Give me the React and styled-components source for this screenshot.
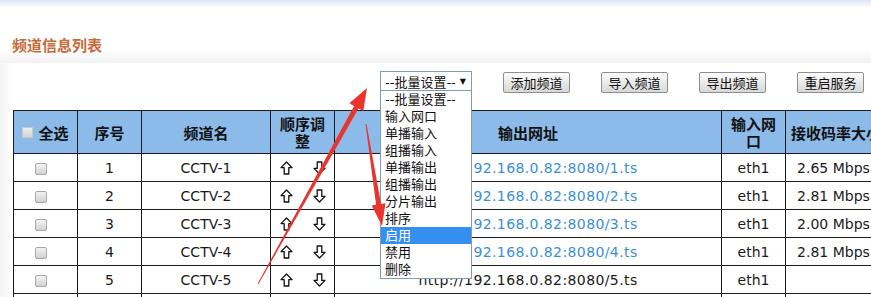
import React from "react";
import { styled, createGlobalStyle } from "styled-components";

const GlobalStyle = createGlobalStyle`
  html, body {
    margin: 0;
    padding: 0;
    width: 871px;
    height: 297px;
    overflow: hidden;
    background: #fff;
  }
  body {
    font-family: "DejaVu Sans", "Noto Sans CJK SC", sans-serif;
    color: #1a1a1a;
  }
`;

const menuItems = [
  "--批量设置--",
  "输入网口",
  "单播输入",
  "组播输入",
  "单播输出",
  "组播输出",
  "分片输出",
  "排序",
  "启用",
  "禁用",
  "删除",
];

const channels = [
  { id: 1, rate: "2.65 Mbps" },
  { id: 2, rate: "2.81 Mbps" },
  { id: 3, rate: "2.00 Mbps" },
  { id: 4, rate: "2.81 Mbps" },
  { id: 5, rate: "", plain: true },
];

const UpArrow = () => (
  <svg width="13" height="14" viewBox="0 0 13 14">
    <path
      d="M6.5 1 L12 6.6 H8.8 V13 H4.2 V6.6 H1 Z"
      fill="#fff"
      stroke="#111"
      strokeWidth="1.3"
      strokeLinejoin="round"
    />
  </svg>
);

const DownArrow = () => (
  <svg width="13" height="14" viewBox="0 0 13 14">
    <path
      d="M6.5 13 L12 7.4 H8.8 V1 H4.2 V7.4 H1 Z"
      fill="#fff"
      stroke="#111"
      strokeWidth="1.3"
      strokeLinejoin="round"
    />
  </svg>
);

export default function App() {
  return (
    <Page>
      <GlobalStyle />
      <TopStrip />
      <TitleBar>
        <Title>频道信息列表</Title>
      </TitleBar>

      <Toolbar>
        <SelectWrap>
          <Select>
            <span>--批量设置--</span>
            <Caret>▼</Caret>
          </Select>
          <Menu>
            {menuItems.map((m) => (
              <MenuItem key={m} $active={m === "启用"}>
                {m}
              </MenuItem>
            ))}
          </Menu>
        </SelectWrap>
        <Button>添加频道</Button>
        <Button>导入频道</Button>
        <Button>导出频道</Button>
        <Button>重启服务</Button>
      </Toolbar>

      <TableWrap>
        <Table>
          <colgroup>
            <col style={{ width: 64 }} />
            <col style={{ width: 64 }} />
            <col style={{ width: 129 }} />
            <col style={{ width: 64 }} />
            <col style={{ width: 387 }} />
            <col style={{ width: 64 }} />
            <col style={{ width: 96 }} />
          </colgroup>
          <thead>
            <tr>
              <Th>
                <HeadCheck />
                全选
              </Th>
              <Th>序号</Th>
              <Th>频道名</Th>
              <Th>顺序调整</Th>
              <Th>输出网址</Th>
              <Th>输入网口</Th>
              <Th $nowrap>接收码率大小</Th>
            </tr>
          </thead>
          <tbody>
            {channels.map((c) => (
              <tr key={c.id}>
                <Td>
                  <RowCheck />
                </Td>
                <Td>{c.id}</Td>
                <Td>CCTV-{c.id}</Td>
                <Td $left>
                  <Arrows>
                    <UpArrow />
                    <DownArrow />
                  </Arrows>
                </Td>
                <Td>
                  <Url $plain={c.plain}>
                    http://192.168.0.82:8080/{c.id}.ts
                  </Url>
                </Td>
                <Td>eth1</Td>
                <Td $nowrap>{c.rate}</Td>
              </tr>
            ))}
            <tr>
              <Td />
              <Td />
              <Td />
              <Td />
              <Td />
              <Td />
              <Td />
            </tr>
          </tbody>
        </Table>
      </TableWrap>

      <Marks width="871" height="297" viewBox="0 0 871 297">
        <polygon
          points="257.6,283.8 354.1,106 349.3,103.3 367,88 363.3,111.1 358.5,108.4 258.4,284.2"
          fill="#e8352d"
        />
        <polygon
          points="365.5,124.1 376.1,204.7 371.7,205.4 382,226 385.5,203.2 381.1,203.9 366.5,123.9"
          fill="#e8352d"
        />
      </Marks>
    </Page>
  );
}

const Page = styled.div`
  position: relative;
  width: 871px;
  height: 297px;
  overflow: hidden;
  background: linear-gradient(to right, #f4f4f4 0, #fff 13px);
`;

const TopStrip = styled.div`
  height: 8px;
  background: linear-gradient(to bottom, #dde6f8, #f4f7fd 70%, #fff);
`;

const TitleBar = styled.div`
  padding: 27px 12px 8px;
  background: linear-gradient(to bottom, #fff 0, #fff 75%, #f2f2f2 100%);
`;

const Title = styled.h2`
  margin: 0;
  font-family: "Noto Sans CJK SC", sans-serif;
  font-size: 15px;
  line-height: 20px;
  font-weight: 700;
  color: #c96a3a;
`;

const Toolbar = styled.div`
  display: flex;
  justify-content: flex-end;
  align-items: flex-start;
  gap: 31px;
  padding: 8px 7px 0 0;
  height: 21px;
`;

const SelectWrap = styled.div`
  position: relative;
  width: 92px;
`;

const Select = styled.div`
  box-sizing: border-box;
  height: 20px;
  display: flex;
  align-items: center;
  justify-content: space-between;
  padding: 0 5px 0 4px;
  border: 1px solid #7f9db9;
  background: #fff;
  font-family: "DejaVu Sans", "Noto Sans CJK SC", sans-serif;
  font-size: 13px;
  color: #111;
`;

const Caret = styled.span`
  font-size: 8px;
  color: #111;
`;

const Menu = styled.ul`
  position: absolute;
  top: 19px;
  left: 0;
  z-index: 2;
  box-sizing: border-box;
  width: 92px;
  margin: 0;
  padding: 0;
  list-style: none;
  border: 1px solid #7f9db9;
  background: #fff;
`;

const MenuItem = styled.li`
  height: 17px;
  line-height: 17px;
  padding-left: 4px;
  font-family: "DejaVu Sans", "Noto Sans CJK SC", sans-serif;
  font-size: 13px;
  white-space: nowrap;
  color: ${(p) => (p.$active ? "#fff" : "#111")};
  background: ${(p) => (p.$active ? "#3390ee" : "transparent")};
`;

const Button = styled.button`
  box-sizing: border-box;
  width: 67px;
  height: 21px;
  padding: 0;
  margin-top: 1px;
  border: 1px solid #8e8e8e;
  border-radius: 2px;
  background: linear-gradient(to bottom, #fcfcfc, #e6e6e6 60%, #d8d8d8);
  font-family: "Noto Sans CJK SC", sans-serif;
  font-size: 13px;
  color: #111;
`;

const TableWrap = styled.div`
  margin-top: 18px;
  padding-left: 13px;
`;

const Table = styled.table`
  table-layout: fixed;
  width: 868px;
  border-collapse: collapse;
  background: #fff;
`;

const Th = styled.th`
  height: 42px;
  padding: 0 5px;
  border: 1px solid #1a1a1a;
  background: #8cbbea;
  font-family: "Noto Sans CJK SC", sans-serif;
  font-size: 15px;
  line-height: 17px;
  font-weight: 700;
  color: #111;
  text-align: center;
  white-space: ${(p) => (p.$nowrap ? "nowrap" : "normal")};
  overflow: hidden;
`;

const Td = styled.td`
  height: 27px;
  padding: 0 ${(p) => (p.$left ? "0 0 9px" : "4px")};
  border: 1px solid #1a1a1a;
  font-size: 14px;
  color: #1a1a1a;
  text-align: ${(p) => (p.$left ? "left" : "center")};
  white-space: ${(p) => (p.$nowrap ? "nowrap" : "normal")};
  overflow: hidden;
`;

const HeadCheck = styled.span`
  display: inline-block;
  width: 9px;
  height: 9px;
  margin-right: 5px;
  vertical-align: 1px;
  border: 1px solid #c9c9c9;
  background: linear-gradient(to bottom, #ececec, #d4d4d4);
`;

const RowCheck = styled.span`
  display: inline-block;
  width: 10px;
  height: 10px;
  margin-right: 9px;
  vertical-align: middle;
  border: 1px solid #a7a7a7;
  border-radius: 2px;
  background: linear-gradient(to bottom, #f2f2f2, #d2d2d2);
`;

const Arrows = styled.div`
  display: flex;
  align-items: center;
  gap: 20px;
`;

const Url = styled.span`
  color: ${(p) => (p.$plain ? "#1a1a1a" : "#3a8ed9")};
  letter-spacing: 0.4px;
  white-space: nowrap;
`;

const Marks = styled.svg`
  position: absolute;
  top: 0;
  left: 0;
  z-index: 3;
  pointer-events: none;
`;
